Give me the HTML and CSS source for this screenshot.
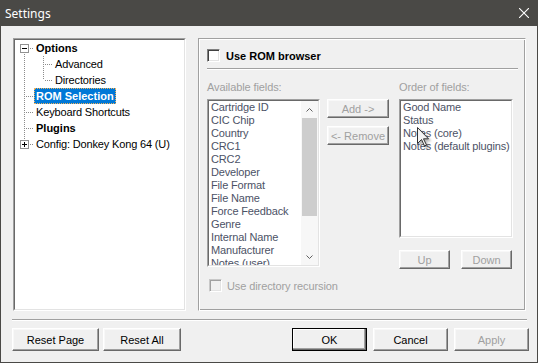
FILE: index.html
```html
<!DOCTYPE html>
<html lang="en">
<head>
    <meta charset="UTF-8">
    <title>Settings</title>
    <link rel="stylesheet" href="styles.css">
</head>
<body>
<div class="window">
    <div class="titlebar">
        <span class="title">Settings</span>
        <svg class="close" width="10" height="10" viewBox="0 0 10 10">
            <path d="M0 0L10 10M10 0L0 10" stroke="#fff" stroke-width="1.1" fill="none"/>
        </svg>
    </div>

    <div class="content">
        <div class="main">
            <!-- tree of settings pages -->
            <div class="sunken tree">
                <div class="well">
                    <div class="node">
                        <span class="ind first">
                            <svg class="exp" width="9" height="9"><rect x="0.5" y="0.5" width="8" height="8" fill="#fff" stroke="#919191"/><path d="M2 4.5h5" stroke="#000"/></svg>
                        </span>
                        <span class="label bold">Options</span>
                    </div>
                    <div class="node">
                        <span class="ind pipe"></span><span class="ind tee"></span>
                        <span class="label">Advanced</span>
                    </div>
                    <div class="node">
                        <span class="ind pipe"></span><span class="ind elbow"></span>
                        <span class="label">Directories</span>
                    </div>
                    <div class="node">
                        <span class="ind tee"></span>
                        <span class="label bold selected">ROM Selection</span>
                    </div>
                    <div class="node">
                        <span class="ind tee"></span>
                        <span class="label">Keyboard Shortcuts</span>
                    </div>
                    <div class="node">
                        <span class="ind tee"></span>
                        <span class="label bold">Plugins</span>
                    </div>
                    <div class="node">
                        <span class="ind elbow">
                            <svg class="exp" width="9" height="9"><rect x="0.5" y="0.5" width="8" height="8" fill="#fff" stroke="#919191"/><path d="M2 4.5h5M4.5 2v5" stroke="#000"/></svg>
                        </span>
                        <span class="label">Config: Donkey Kong 64 (U)</span>
                    </div>
                </div>
            </div>

            <!-- ROM selection page -->
            <div class="page">
                <div class="browse">
                    <span class="check"></span>
                    <span class="browse-label">Use ROM browser</span>
                </div>
                <div class="etched"></div>

                <div class="fields">
                    <div class="col avail">
                        <div class="caption">Available fields:</div>
                        <div class="sunken list-avail">
                            <div class="well list-row">
                                <ul class="items">
                                    <li>Cartridge ID</li>
                                    <li>CIC Chip</li>
                                    <li>Country</li>
                                    <li>CRC1</li>
                                    <li>CRC2</li>
                                    <li>Developer</li>
                                    <li>File Format</li>
                                    <li>File Name</li>
                                    <li>Force Feedback</li>
                                    <li>Genre</li>
                                    <li>Internal Name</li>
                                    <li>Manufacturer</li>
                                    <li>Notes (user)</li>
                                </ul>
                                <div class="scrollbar">
                                    <div class="arrow">
                                        <svg width="7" height="4" viewBox="0 0 7 4"><path d="M0.5 3.5L3.5 0.5L6.5 3.5" stroke="#606060" fill="none"/></svg>
                                    </div>
                                    <div class="track"><div class="thumb"></div></div>
                                    <div class="arrow">
                                        <svg width="7" height="4" viewBox="0 0 7 4"><path d="M0.5 0.5L3.5 3.5L6.5 0.5" stroke="#606060" fill="none"/></svg>
                                    </div>
                                </div>
                            </div>
                        </div>
                    </div>

                    <div class="col mid">
                        <button class="btn small">Add -&gt;</button>
                        <button class="btn small remove">&lt;- Remove</button>
                    </div>

                    <div class="col order">
                        <div class="caption">Order of fields:</div>
                        <div class="sunken list-order">
                            <div class="well">
                                <ul class="items">
                                    <li>Good Name</li>
                                    <li>Status</li>
                                    <li>Notes (core)</li>
                                    <li>Notes (default plugins)</li>
                                </ul>
                            </div>
                        </div>
                        <div class="updown">
                            <button class="btn small updown-btn">Up</button>
                            <button class="btn small updown-btn">Down</button>
                        </div>
                    </div>
                </div>

                <div class="recurse">
                    <span class="check disabled"></span>
                    <span class="caption">Use directory recursion</span>
                </div>
            </div>
        </div>

        <div class="separator"></div>

        <div class="footer">
            <div class="btn-group">
                <button class="btn wide">Reset Page</button>
                <button class="btn reset-all">Reset All</button>
            </div>
            <div class="btn-group right">
                <button class="btn std default">OK</button>
                <button class="btn std">Cancel</button>
                <button class="btn std off">Apply</button>
            </div>
        </div>
    </div>

    <!-- mouse pointer captured in the screenshot -->
    <svg class="cursor" width="14" height="21" viewBox="0 0 14 21">
        <path d="M0.5 0.5L0.5 16.5L4.5 12.5L7.5 19L9.5 18L6.5 11.8L11.5 11.8Z" fill="#f4f4f4" stroke="#333" stroke-linejoin="round"/>
    </svg>
</div>
</body>
</html>
```

FILE: styles.css
```css
body {
    margin: 0;
    font-family: "Liberation Sans", Arial, sans-serif;
    font-size: 11px;
    color: #000;
    background: #f0f0f0;
}

.window {
    position: relative;
    width: 538px;
    height: 363px;
    box-sizing: border-box;
    border: 1px solid #4a4946;
    border-top: 0;
    background: #f0f0f0;
    overflow: hidden;
}

/* title bar */
.titlebar {
    height: 26px;
    margin: 0 -1px;
    padding: 0 9px 0 5px;
    display: flex;
    align-items: center;
    justify-content: space-between;
    background: #4a4946;
}
.title {
    color: #fff;
    font-family: "Noto Sans", sans-serif;
    font-size: 12px;
}
.close {
    display: block;
}

.content {
    padding: 12px 10px 11px 12px;
}
.main {
    display: flex;
    gap: 12px;
    height: 273px;
}

/* 3d borders */
.sunken {
    box-sizing: border-box;
    border: 1px solid;
    border-color: #a0a0a0 #fff #fff #a0a0a0;
}
.well {
    box-sizing: border-box;
    height: 100%;
    border: 1px solid;
    border-color: #696969 #e3e3e3 #e3e3e3 #696969;
    background: #fff;
    overflow: hidden;
}

/* tree */
.tree {
    width: 173px;
    height: 100%;
}
.node {
    display: flex;
    height: 16px;
    line-height: 16px;
}
.ind {
    flex: none;
    width: 19px;
    height: 16px;
}
.pipe {
    background: repeating-linear-gradient(#8c8c8c 0 1px, transparent 1px 2px) 9px 0 / 1px 16px no-repeat;
}
.tee {
    background:
        repeating-linear-gradient(to right, #8c8c8c 0 1px, transparent 1px 2px) 11px 8px / 8px 1px no-repeat,
        repeating-linear-gradient(#8c8c8c 0 1px, transparent 1px 2px) 9px 0 / 1px 16px no-repeat;
}
.elbow {
    background:
        repeating-linear-gradient(to right, #8c8c8c 0 1px, transparent 1px 2px) 11px 8px / 8px 1px no-repeat,
        repeating-linear-gradient(#8c8c8c 0 1px, transparent 1px 2px) 9px 0 / 1px 8px no-repeat;
}
.first {
    background:
        repeating-linear-gradient(to right, #8c8c8c 0 1px, transparent 1px 2px) 11px 8px / 8px 1px no-repeat,
        repeating-linear-gradient(#8c8c8c 0 1px, transparent 1px 2px) 9px 10px / 1px 6px no-repeat;
}
.exp {
    display: block;
    margin: 4px 0 0 5px;
}
.label {
    padding: 0 2px;
    white-space: nowrap;
    letter-spacing: -0.15px;
}
.bold {
    font-weight: bold;
    letter-spacing: 0;
}
.selected {
    background: #0078d7;
    color: #fff;
    outline: 1px dotted #f3b35a;
    outline-offset: -1px;
}

/* right page */
.page {
    width: 328px;
    height: 100%;
    box-sizing: border-box;
    border: 1px solid;
    border-color: #a0a0a0 #fff #fff #a0a0a0;
    box-shadow: inset 1px 1px #fff, inset -1px -1px #a0a0a0;
    padding: 9px 7px 0 8px;
}
.browse {
    display: flex;
    align-items: center;
    height: 15px;
}
.check {
    width: 13px;
    height: 13px;
    box-sizing: border-box;
    border: 1px solid;
    border-color: #808080 #fff #fff #808080;
    box-shadow: inset 1px 1px #404040, inset -1px -1px #e3e3e3;
    background: #fff;
}
.check.disabled {
    border-color: #c8c8c8 #fff #fff #c8c8c8;
    box-shadow: inset 1px 1px #a0a0a0, inset -1px -1px #e3e3e3;
    background: #f0f0f0;
}
.browse-label {
    margin-left: 6px;
    font-weight: bold;
}
.etched {
    margin-top: 5px;
    border-top: 1px solid #a0a0a0;
    border-bottom: 1px solid #fff;
}

.fields {
    display: flex;
    margin-top: 10px;
}
.caption {
    color: #a0a0a0;
    line-height: 14px;
    height: 14px;
    white-space: nowrap;
    letter-spacing: -0.1px;
}
.col .caption {
    margin-bottom: 5px;
}
.avail {
    width: 113px;
}
.mid {
    width: 62px;
    margin-left: 7px;
    padding-top: 19px;
    display: flex;
    flex-direction: column;
}
.order {
    width: 114px;
    margin-left: 10px;
}

.list-avail {
    height: 168px;
}
.list-order {
    height: 139px;
}
.list-row {
    display: flex;
}
.items {
    flex: 1;
    list-style: none;
    margin: 0;
    padding: 0 0 0 2px;
    color: #4c5266;
    line-height: 13px;
    white-space: nowrap;
    letter-spacing: -0.15px;
    overflow: hidden;
}

.scrollbar {
    flex: none;
    width: 17px;
    display: flex;
    flex-direction: column;
    background: #f7f7f7;
}
.arrow {
    height: 17px;
    display: flex;
    align-items: center;
    justify-content: center;
}
.arrow svg {
    display: block;
}
.track {
    flex: 1;
    padding: 0 1px;
}
.thumb {
    height: 98px;
    background: #cdcdcd;
}

/* buttons */
.btn {
    box-sizing: border-box;
    margin: 0;
    padding: 0;
    font-family: inherit;
    font-size: 11px;
    color: #000;
    background: #f0f0f0;
    border: 1px solid;
    border-color: #fff #696969 #696969 #fff;
    box-shadow: inset -1px -1px #a0a0a0, inset 1px 1px #f8f8f8;
}
.btn.small {
    height: 19px;
    color: #a0a0a0;
}
.remove {
    margin-top: 8px;
}
.updown {
    display: flex;
    gap: 11px;
    margin-top: 12px;
}
.updown-btn {
    width: 51px;
}
.recurse {
    display: flex;
    align-items: center;
    gap: 5px;
    height: 13px;
    margin: 10px 0 0 2px;
}

.separator {
    margin: 8px 0 0 -1px;
    border-top: 1px solid #a0a0a0;
    border-bottom: 1px solid #fff;
}
.footer {
    display: flex;
    justify-content: space-between;
    margin: 7px -2px 0 -1px;
}
.btn-group {
    display: flex;
    gap: 4px;
}
.btn-group.right {
    gap: 6px;
}
.footer .btn {
    height: 23px;
}
.wide {
    width: 87px;
}
.reset-all {
    width: 78px;
}
.std {
    width: 75px;
}
.default {
    border-color: #000;
    box-shadow: inset -1px -1px #696969, inset -2px -2px #a0a0a0, inset 1px 1px #fff;
}
.off {
    color: #a0a0a0;
}

.cursor {
    position: absolute;
    left: 416px;
    top: 127px;
    filter: drop-shadow(2px 2px 1px rgba(0, 0, 0, 0.3));
}
```
